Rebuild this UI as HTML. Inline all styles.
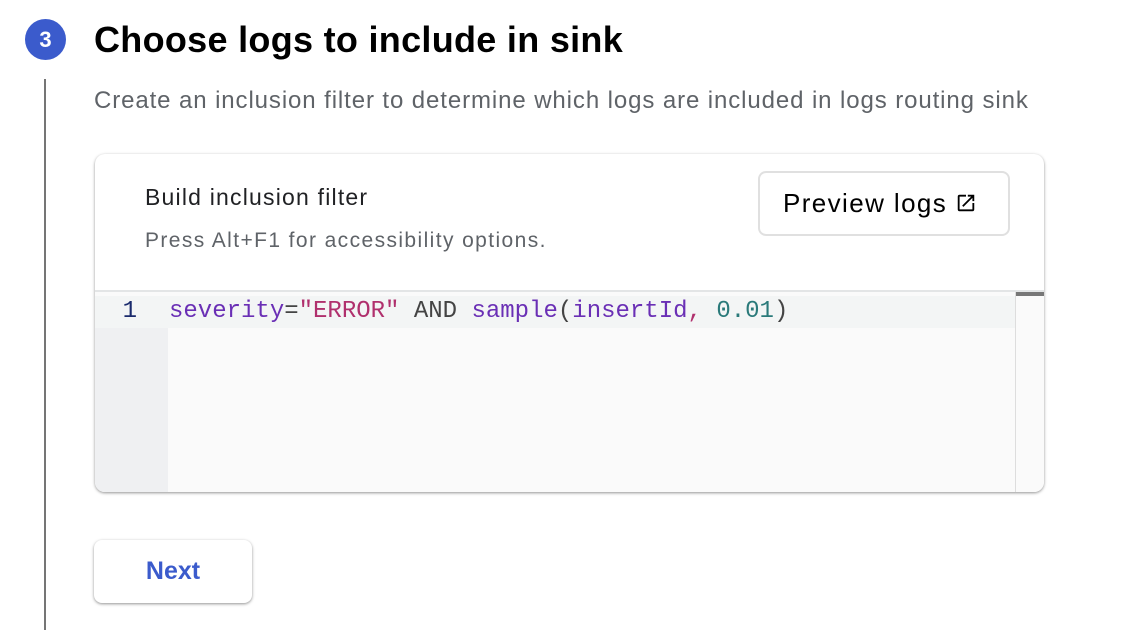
<!DOCTYPE html>
<html><head><style>
body{margin:0;width:1128px;height:630px;background:#fff;font-family:"Liberation Sans",sans-serif;position:relative;overflow:hidden}
.abs{position:absolute}
</style></head><body>
<div class="abs" style="left:25px;top:19px;width:41px;height:41px;border-radius:50%;background:#3b5bcc;color:#fff;font-size:22px;font-weight:bold;text-align:center;line-height:41px">3</div>
<div class="abs" style="left:44px;top:79px;width:2px;height:551px;background:#757575"></div>
<div class="abs" style="left:94px;top:16px;font-size:36px;font-weight:bold;letter-spacing:0.3px;color:#000;line-height:48px">Choose logs to include in sink</div>
<div class="abs" style="left:94px;top:86px;font-size:24px;letter-spacing:0.9px;color:#5f6368;line-height:30px;white-space:nowrap">Create an inclusion filter to determine which logs are included in logs routing sink</div>
<div class="abs" style="left:95px;top:154px;width:949px;height:338px;border-radius:10px;background:#fff;box-shadow:0 1px 3px rgba(0,0,0,.3),0 1px 2px rgba(0,0,0,.15);overflow:hidden">
 <div class="abs" style="left:50px;top:30px;font-size:23px;letter-spacing:1.2px;color:#202124">Build inclusion filter</div>
 <div class="abs" style="left:50px;top:75px;font-size:21px;letter-spacing:1.4px;color:#5f6368;white-space:nowrap">Press Alt+F1 for accessibility options.</div>
 <div class="abs" style="left:663px;top:17px;width:252px;height:65px;border:2px solid #e0e0e0;border-radius:8px;box-sizing:border-box;font-size:26px;letter-spacing:1.4px;color:#000;line-height:61px;padding-left:23px;white-space:nowrap">Preview logs<svg width="22" height="22" viewBox="0 0 24 24" style="vertical-align:-2px;margin-left:8px"><path d="M19 19H5V5h7V3H5a2 2 0 0 0-2 2v14a2 2 0 0 0 2 2h14a2 2 0 0 0 2-2v-7h-2v7zM14 3v2h3.6l-9.8 9.8 1.4 1.4L19 6.4V10h2V3h-7z" fill="#000"/></svg></div>
 <div class="abs" style="left:0;top:136px;width:949px;height:202px;background:#fafafa;border-top:2px solid #e3e5e6">
  <div class="abs" style="left:0;top:36px;width:73px;height:166px;background:#eff0f2"></div>
  <div class="abs" style="left:0;top:4px;width:921px;height:32px;background:#f3f5f5"></div>
  <div class="abs" style="left:920px;top:0;width:1px;height:202px;background:#ddd"></div>
  <div class="abs" style="left:921px;top:0;width:28px;height:4px;background:#777"></div>
  <div class="abs" style="left:0;top:4px;width:900px;height:32px;font-family:'Liberation Mono',monospace;font-size:24px;line-height:32px;white-space:pre"><span style="display:inline-block;width:42px;text-align:right;color:#1a2a6c">1</span><span style="display:inline-block;width:32px"></span><span style="color:#6a2fb5">severity</span><span style="color:#444">=</span><span style="color:#b0306d">"ERROR"</span><span style="color:#444"> AND </span><span style="color:#6a2fb5">sample</span><span style="color:#444">(</span><span style="color:#6a2fb5">insertId</span><span style="color:#b0306d">,</span> <span style="color:#2a7a7a">0.01</span><span style="color:#444">)</span></div>
 </div>
</div>
<div class="abs" style="left:94px;top:540px;width:158px;height:63px;border-radius:8px;background:#fff;box-shadow:0 1px 3px rgba(0,0,0,.3),0 1px 2px rgba(0,0,0,.15);color:#3b5bcc;font-size:25px;font-weight:bold;text-align:center;line-height:63px">Next</div>
</body></html>
